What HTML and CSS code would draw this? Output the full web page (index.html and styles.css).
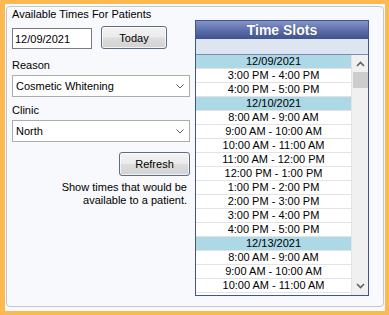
FILE: index.html
```html
<!DOCTYPE html>
<html lang="en">
<head>
    <meta charset="UTF-8">
    <title>Available Times</title>
    <link rel="stylesheet" href="styles.css">
</head>
<body>
    <div class="frame">
        <div class="groupbox">
            <div class="left">
                <div class="title">Available Times For Patients</div>

                <div class="date-row">
                    <input type="text" class="date-box" value="12/09/2021">
                    <button class="btn btn-today">Today</button>
                </div>

                <label class="field-label label-reason">Reason</label>
                <div class="combo">
                    <span>Cosmetic Whitening</span>
                    <svg class="chev" width="8" height="5" viewBox="0 0 8 5"><path d="M0.5 0.5 L4 4 L7.5 0.5" fill="none" stroke="#606060" stroke-width="1"/></svg>
                </div>

                <label class="field-label label-clinic">Clinic</label>
                <div class="combo">
                    <span>North</span>
                    <svg class="chev" width="8" height="5" viewBox="0 0 8 5"><path d="M0.5 0.5 L4 4 L7.5 0.5" fill="none" stroke="#606060" stroke-width="1"/></svg>
                </div>

                <div class="refresh-row">
                    <button class="btn btn-refresh">Refresh</button>
                </div>
                <p class="hint">Show times that would be<br>available to a patient.</p>
            </div>

            <div class="slots">
                <div class="slots-head">Time Slots</div>
                <div class="slots-sub"></div>
                <div class="slots-body">
                    <div class="slot-list">
                        <div class="row day">12/09/2021</div>
                        <div class="row">3:00 PM - 4:00 PM</div>
                        <div class="row">4:00 PM - 5:00 PM</div>
                        <div class="row day">12/10/2021</div>
                        <div class="row">8:00 AM - 9:00 AM</div>
                        <div class="row">9:00 AM - 10:00 AM</div>
                        <div class="row">10:00 AM - 11:00 AM</div>
                        <div class="row">11:00 AM - 12:00 PM</div>
                        <div class="row">12:00 PM - 1:00 PM</div>
                        <div class="row">1:00 PM - 2:00 PM</div>
                        <div class="row">2:00 PM - 3:00 PM</div>
                        <div class="row">3:00 PM - 4:00 PM</div>
                        <div class="row">4:00 PM - 5:00 PM</div>
                        <div class="row day">12/13/2021</div>
                        <div class="row">8:00 AM - 9:00 AM</div>
                        <div class="row">9:00 AM - 10:00 AM</div>
                        <div class="row">10:00 AM - 11:00 AM</div>
                    </div>
                    <div class="scrollbar">
                        <svg class="arrow" width="9" height="6" viewBox="0 0 9 6"><path d="M1 5 L4.5 1.5 L8 5" fill="none" stroke="#606060" stroke-width="1.6"/></svg>
                        <div class="thumb"></div>
                        <div class="track"></div>
                        <svg class="arrow" width="9" height="6" viewBox="0 0 9 6"><path d="M1 1 L4.5 4.5 L8 1" fill="none" stroke="#606060" stroke-width="1.6"/></svg>
                    </div>
                </div>
            </div>
        </div>
    </div>
</body>
</html>
```

FILE: styles.css
```css
body{
    margin: 0;
    font-family: "Liberation Sans", Arial, sans-serif;
    font-size: 11px;
    color: #000;
}
.frame{
    width: 389px;
    height: 315px;
    box-sizing: border-box;
    background-color: #f8f9fc;
    border: 4px solid #fdb94f;
    border-left-width: 5px;
    padding: 2px 1px 4px 1px;
}
.groupbox{
    height: 100%;
    box-sizing: border-box;
    border: 1px solid #c3c6ca;
    border-radius: 4px;
    display: flex;
    gap: 5px;
    padding: 1px 14px 0 5px;
}
.left{
    width: 178px;
    display: flex;
    flex-direction: column;
}
.title{
    line-height: 13px;
}
.date-row{
    display: flex;
    gap: 9px;
    margin-top: 5px;
    align-items: flex-start;
}
.date-box{
    width: 80px;
    height: 21px;
    margin-top: 2px;
    box-sizing: border-box;
    border: 1px solid #7a7a7a;
    background: #fff;
    font-family: inherit;
    font-size: 11px;
    padding: 0 2px;
    color: #000;
}
.btn{
    box-sizing: border-box;
    border: 1px solid #5b6f82;
    border-radius: 3px;
    background: linear-gradient(#f3f3f3 0%, #ebebeb 48%, #dddddd 52%, #d2d2d2 100%);
    font-family: inherit;
    font-size: 11px;
    color: #000;
    padding: 0;
    box-shadow: inset 0 0 0 1px rgba(255,255,255,0.7);
}
.btn-today{
    width: 66px;
    height: 23px;
}
.field-label{
    line-height: 13px;
}
.label-reason{
    margin-top: 10px;
}
.label-clinic{
    margin-top: 7px;
}
.combo{
    margin-top: 3px;
    height: 22px;
    box-sizing: border-box;
    border: 1px solid #acacac;
    background: #fff;
    display: flex;
    align-items: center;
    justify-content: space-between;
    padding: 0 5px 0 3px;
}
.chev{
    display: block;
}
.refresh-row{
    display: flex;
    justify-content: flex-end;
    margin-top: 10px;
}
.btn-refresh{
    width: 71px;
    height: 24px;
}
.hint{
    margin: 5px 3px 0 0;
    text-align: right;
    line-height: 13px;
}
.slots{
    width: 174px;
    height: 276px;
    margin-top: 12px;
    box-sizing: border-box;
    border: 1px solid #40558f;
    display: flex;
    flex-direction: column;
}
.slots-head{
    height: 18px;
    line-height: 18px;
    text-align: center;
    color: #fff;
    font-weight: bold;
    font-size: 14px;
    background: linear-gradient(#8494c9, #5a6ca7 55%, #3f528f);
    text-shadow: 0 0 1px rgba(0,0,0,0.4);
}
.slots-sub{
    height: 15px;
    background-color: #dde6f0;
    border-bottom: 1px solid #7d8bb5;
}
.slots-body{
    flex: 1;
    display: flex;
    overflow: hidden;
}
.slot-list{
    flex: 1;
    overflow: hidden;
    background: #fff;
    border-right: 1px solid #e4e4e4;
}
.row{
    height: 13px;
    line-height: 13px;
    text-align: center;
    background: #fff;
    border-bottom: 1px solid #e3e3e3;
}
.row.day{
    background-color: #add8e6;
}
.scrollbar{
    width: 16px;
    background-color: #f0f0f0;
    display: flex;
    flex-direction: column;
    align-items: center;
}
.arrow{
    display: block;
    margin: 6px 0;
}
.thumb{
    width: 15px;
    height: 16px;
    background-color: #cdcdcd;
    margin-top: -1px;
}
.track{
    flex: 1;
}
```
